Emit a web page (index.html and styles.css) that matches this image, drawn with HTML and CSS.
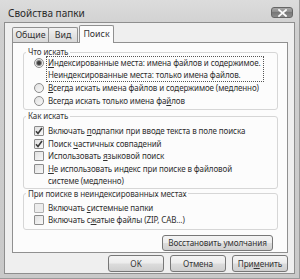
FILE: index.html
```html
<!DOCTYPE html>
<html lang="ru">
<head>
<meta charset="utf-8">
<title>Свойства папки</title>
<link rel="stylesheet" href="styles.css">
</head>
<body>
<div class="window">
  <div class="titlebar">
    <span class="title">Свойства папки</span>
    <span class="close">
      <svg width="9" height="8" viewBox="0 0 9 8"><path d="M1 1 L8 7 M8 1 L1 7" stroke="#fafafa" stroke-width="1.8" stroke-linecap="square"/></svg>
    </span>
  </div>
  <div class="client">
    <div class="tabs">
      <span class="tab t1">Общие</span>
      <span class="tab t2">Вид</span>
      <span class="tab t3 active">Поиск</span>
    </div>
    <div class="panel">
      <fieldset class="group g1">
        <legend>Что искать</legend>
        <div class="opt"><span class="radio on"></span><span class="txt focus"><u>И</u>ндексированные места: имена файлов и содержимое.<br>Неиндексированные места: только имена файлов.</span></div>
        <div class="opt"><span class="radio"></span><span class="txt"><u>В</u>сегда искать имена файлов и содержимое (медленно)</span></div>
        <div class="opt"><span class="radio"></span><span class="txt">Всегда искать только имена фа<u>й</u>лов</span></div>
      </fieldset>
      <fieldset class="group g2">
        <legend>Как искать</legend>
        <div class="opt"><span class="check on"><svg width="8" height="8" viewBox="0 0 8 8"><path d="M1 4.2 L3 6.5 L7 1" fill="none" stroke="#3a3a3a" stroke-width="1.6"/></svg></span><span class="txt">Включать <u>п</u>одпапки при вводе текста в поле поиска</span></div>
        <div class="opt"><span class="check on"><svg width="8" height="8" viewBox="0 0 8 8"><path d="M1 4.2 L3 6.5 L7 1" fill="none" stroke="#3a3a3a" stroke-width="1.6"/></svg></span><span class="txt">Поиск <u>ч</u>астичных совпадений</span></div>
        <div class="opt"><span class="check"></span><span class="txt">Использовать <u>я</u>зыковой поиск</span></div>
        <div class="opt"><span class="check"></span><span class="txt"><u>Н</u>е использовать индекс при поиске в файловой<br>системе (медленно)</span></div>
      </fieldset>
      <fieldset class="group g3">
        <legend>При поиске в неиндексированных местах</legend>
        <div class="opt"><span class="check dim"></span><span class="txt">Включать <u>с</u>истемные папки</span></div>
        <div class="opt"><span class="check"></span><span class="txt">Включать с<u>ж</u>атые файлы (ZIP, CAB...)</span></div>
      </fieldset>
      <div class="restore-row">
        <button class="btn restore">Восстановить умолчания</button>
      </div>
    </div>
    <div class="actions">
      <button class="btn">OK</button>
      <button class="btn">Отмена</button>
      <button class="btn">При<u>м</u>енить</button>
    </div>
  </div>
</div>
</body>
</html>
```
FILE: styles.css
```css
* { box-sizing: border-box; }
html, body { margin: 0; padding: 0; background: #d4d4d4; }
body { font-family: "Noto Sans", "Open Sans", sans-serif; color: #2e2e2e; }

.window {
  width: 300px;
  height: 279px;
  display: flex;
  flex-direction: column;
  padding: 0 4px 5px 4px;
  background: linear-gradient(#dcdcdc, #cfcfcf 30px, #c9c9c9);
  border-right: 1px solid #9a9a9a;
  border-bottom: 1px solid #9a9a9a;
}

.titlebar {
  height: 22px;
  flex: none;
  display: flex;
  align-items: center;
  justify-content: space-between;
  padding: 0 2px 0 4px;
}
.title {
  font-size: 10px;
  color: #2a2a2a;
  margin-top: 4px;
}
.close {
  width: 22px;
  height: 11px;
  margin-top: 3px;
  border: 1px solid #666;
  border-radius: 3px;
  background: linear-gradient(#a8a8a8, #8a8a8a 50%, #777 50%, #8c8c8c);
  display: flex;
  align-items: center;
  justify-content: center;
}

.client {
  flex: 1;
  display: flex;
  flex-direction: column;
  background: #efefef;
  border: 1px solid #8e8e8e;
  padding: 2px 6px 1px 7px;
}

.tabs {
  display: flex;
  align-items: flex-end;
  height: 17px;
  flex: none;
  font-size: 8.8px;
}
.tab {
  height: 15px;
  border: 1px solid #909090;
  border-bottom: none;
  border-radius: 2px 2px 0 0;
  background: linear-gradient(#f2f2f2, #e4e4e4 50%, #d8d8d8);
  display: flex;
  align-items: center;
  justify-content: center;
  color: #333;
}
.t1 { width: 37px; }
.t2 { width: 30px; margin-left: -1px; }
.t3 { width: 35px; margin-left: 1px; }
.tab.active {
  height: 18px;
  margin-bottom: -1px;
  background: #fcfcfc;
  position: relative;
  z-index: 1;
  padding-bottom: 2px;
}

.panel {
  height: 211px;
  flex: none;
  border: 1px solid #909090;
  background: #fcfcfc;
  padding: 4px 9px 0 10px;
  font-size: 8px;
  letter-spacing: -0.1px;
}

.group {
  margin: 0;
  border: 1px solid #d6d6d6;
  border-radius: 3px;
  padding: 0 6px 0 10px;
  display: flex;
  flex-direction: column;
}
.group legend {
  line-height: 10px;
  padding: 0 2px;
  margin-left: -8px;
  color: #333;
}
.g1 { padding-top: 0; padding-bottom: 2px; gap: 1px; }
.g2 { margin-top: 1px; padding-top: 4px; padding-bottom: 0; }
.g3 { padding-top: 3px; padding-bottom: 2px; }

.opt {
  display: flex;
  align-items: flex-start;
  line-height: 12.5px;
}
.g1 .opt { line-height: 12px; }
.txt { margin-left: 4px; white-space: nowrap; }
.txt.focus {
  display: inline-block;
  margin-left: 3px;
  padding-left: 1px;
  padding-right: 2px;
  outline: 1px dotted #555;
}
u { text-decoration-thickness: 1px; text-underline-offset: 1px; }

.radio, .check {
  flex: none;
  width: 10px;
  height: 10px;
  margin-top: 1px;
  border: 1px solid #8c8c8c;
  background: linear-gradient(135deg, #e0e0e0, #f8f8f8);
  display: flex;
  align-items: center;
  justify-content: center;
}
.radio { border-radius: 50%; }
.radio.on::after {
  content: "";
  width: 4px;
  height: 4px;
  border-radius: 50%;
  background: #3c3c3c;
  box-shadow: 0 0 0 1px #8a8a8a;
}
.check { border-radius: 1px; }
.check.dim { border-color: #b0b0b0; background: #ececec; }

.restore-row {
  display: flex;
  justify-content: flex-end;
  padding-right: 5px;
  margin-top: 5px;
}

.btn {
  font-family: inherit;
  font-size: 8.2px;
  letter-spacing: -0.1px;
  color: #333;
  height: 17px;
  padding: 0;
  border: 1px solid #777;
  border-radius: 3px;
  background: linear-gradient(#f4f4f4, #ececec 48%, #dcdcdc 52%, #cfcfcf);
  line-height: 14px;
}
.restore { width: 111px; height: 16px; }

.actions {
  display: flex;
  justify-content: flex-end;
  gap: 6px;
  margin-top: 2px;
}
.actions .btn { width: 56px; }
```
